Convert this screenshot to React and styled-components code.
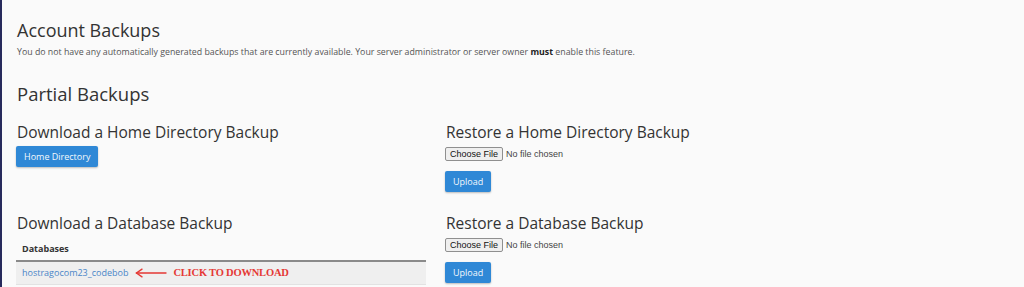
import React from 'react';
import styled, { createGlobalStyle } from 'styled-components';

const GlobalStyle = createGlobalStyle`
  html, body {
    margin: 0;
    padding: 0;
    background: #fafafa;
  }
  body {
    font-family: "Open Sans", "Liberation Sans", sans-serif;
    color: #333;
  }
`;

const Page = styled.div`
  min-height: 287px;
  box-sizing: border-box;
  border-left: 2px solid #272a5c;
  padding: 20px 0 0 15px;
`;

const PageTitle = styled.h1`
  margin: 0;
  font-size: 18px;
  line-height: 20px;
  font-weight: 400;
  color: #333;
`;

const Notice = styled.p`
  margin: 5px 0 0;
  font-size: 8.8px;
  line-height: 14px;
  color: #555;

  strong {
    color: #222;
    font-weight: 700;
  }
`;

const SectionTitle = styled(PageTitle)`
  margin-top: 25px;
  font-size: 18.5px;
`;

const Columns = styled.div`
  display: grid;
  grid-template-columns: 410px 410px;
  column-gap: 19px;
  row-gap: 22px;
  align-items: start;
  margin-top: 19px;
  margin-left: -1px;
`;

const Block = styled.div`
  display: flex;
  flex-direction: column;
  align-items: flex-start;
`;

const BlockTitle = styled.h2`
  margin: 0 0 ${(p) => p.$gap || 5}px;
  font-size: 15.5px;
  line-height: 18px;
  font-weight: 400;
  color: #333;
  padding-left: 1px;
`;

const Button = styled.button`
  height: 21px;
  padding: 0 8px;
  border: 0;
  border-radius: 2px;
  background: #2f88d6;
  color: #f4f8fc;
  font-family: "Open Sans", "Liberation Sans", sans-serif;
  font-size: 9px;
  line-height: 21px;
  box-shadow: 0 1px 2px rgba(0, 0, 0, 0.25);
  cursor: pointer;
  margin-top: ${(p) => p.$top || 0}px;
`;

const FileInput = styled.input`
  font-family: "Liberation Sans", Arial, sans-serif;
  font-size: 9px;
  color: #444;
  height: 14px;
  margin: 0;

  &::file-selector-button {
    height: 14px;
    box-sizing: border-box;
    padding: 0 4px;
    margin-right: 3px;
    font-family: "Liberation Sans", Arial, sans-serif;
    font-size: 9px;
    color: #111;
    background: #efefef;
    border: 1px solid #8f8f8f;
    border-radius: 2px;
  }
`;

const Table = styled.table`
  width: 410px;
  border-collapse: collapse;
  margin-top: 1px;
`;

const HeadCell = styled.th`
  text-align: left;
  padding: 5px 6px;
  font-size: 9px;
  line-height: 12px;
  font-weight: 700;
  color: #333;
  border-bottom: 2px solid #8a8a8a;
`;

const Cell = styled.td`
  padding: 5px 6px;
  font-size: 9px;
  line-height: 12px;
  background: #efefef;
  border-bottom: 1px solid #e2e2e2;
`;

const CellInner = styled.div`
  display: flex;
  align-items: center;
`;

const DbLink = styled.a`
  color: #4a86c8;
  text-decoration: none;
`;

const Hint = styled.span`
  display: inline-flex;
  align-items: center;
  gap: 6px;
  margin-left: 7px;
  color: #e53935;
  font-family: "Liberation Serif", "Times New Roman", serif;
  font-weight: 700;
  font-size: 10.5px;
  letter-spacing: -0.2px;
`;

const Arrow = () => (
  <svg width="32" height="10" viewBox="0 0 32 10" fill="none" stroke="#e53935" strokeWidth="1.4" strokeLinecap="round">
    <path d="M1.5 5H31" />
    <path d="M7 1.2L1.5 5L7 8.8" />
  </svg>
);

export default function App() {
  return (
    <>
      <GlobalStyle />
      <Page>
        <PageTitle>Account Backups</PageTitle>
        <Notice>
          You do not have any automatically generated backups that are currently available. Your server
          administrator or server owner <strong>must</strong> enable this feature.
        </Notice>

        <SectionTitle>Partial Backups</SectionTitle>

        <Columns>
          <Block>
            <BlockTitle>Download a Home Directory Backup</BlockTitle>
            <Button>Home Directory</Button>
          </Block>

          <Block>
            <BlockTitle $gap={6}>Restore a Home Directory Backup</BlockTitle>
            <FileInput type="file" />
            <Button $top={10}>Upload</Button>
          </Block>

          <Block>
            <BlockTitle $gap={5}>Download a Database Backup</BlockTitle>
            <Table>
              <thead>
                <tr>
                  <HeadCell>Databases</HeadCell>
                </tr>
              </thead>
              <tbody>
                <tr>
                  <Cell>
                    <CellInner>
                      <DbLink href="#">hostragocom23_codebob</DbLink>
                      <Hint>
                        <Arrow />
                        CLICK TO DOWNLOAD
                      </Hint>
                    </CellInner>
                  </Cell>
                </tr>
              </tbody>
            </Table>
          </Block>

          <Block>
            <BlockTitle $gap={6}>Restore a Database Backup</BlockTitle>
            <FileInput type="file" />
            <Button $top={10}>Upload</Button>
          </Block>
        </Columns>
      </Page>
    </>
  );
}
